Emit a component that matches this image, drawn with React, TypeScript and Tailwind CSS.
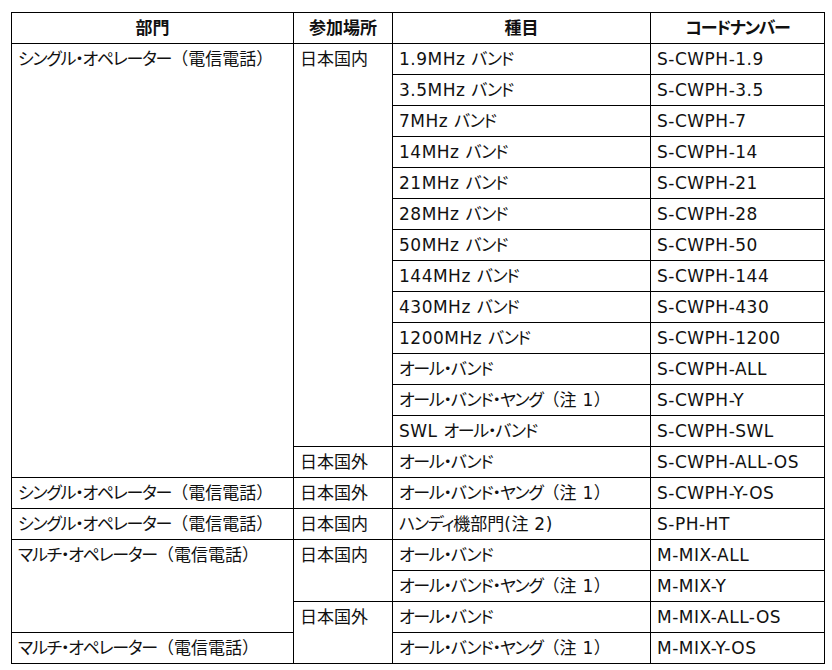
import type { ReactNode } from 'react'

type Row = {
  dept?: { text: string; span: number }
  place?: { text: string; span: number }
  event: string
  code: string
}

const SINGLE = 'シングル・オペレーター（電信電話）'
const MULTI = 'マルチ・オペレーター（電信電話）'

const rows: Row[] = [
  { dept: { text: SINGLE, span: 14 }, place: { text: '日本国内', span: 13 }, event: '1.9MHz バンド', code: 'S-CWPH-1.9' },
  { event: '3.5MHz バンド', code: 'S-CWPH-3.5' },
  { event: '7MHz バンド', code: 'S-CWPH-7' },
  { event: '14MHz バンド', code: 'S-CWPH-14' },
  { event: '21MHz バンド', code: 'S-CWPH-21' },
  { event: '28MHz バンド', code: 'S-CWPH-28' },
  { event: '50MHz バンド', code: 'S-CWPH-50' },
  { event: '144MHz バンド', code: 'S-CWPH-144' },
  { event: '430MHz バンド', code: 'S-CWPH-430' },
  { event: '1200MHz バンド', code: 'S-CWPH-1200' },
  { event: 'オール・バンド', code: 'S-CWPH-ALL' },
  { event: 'オール・バンド・ヤング（注 1）', code: 'S-CWPH-Y' },
  { event: 'SWL オール・バンド', code: 'S-CWPH-SWL' },
  { place: { text: '日本国外', span: 1 }, event: 'オール・バンド', code: 'S-CWPH-ALL-OS' },
  { dept: { text: SINGLE, span: 1 }, place: { text: '日本国外', span: 1 }, event: 'オール・バンド・ヤング（注 1）', code: 'S-CWPH-Y-OS' },
  { dept: { text: SINGLE, span: 1 }, place: { text: '日本国内', span: 1 }, event: 'ハンディ機部門(注 2)', code: 'S-PH-HT' },
  { dept: { text: MULTI, span: 3 }, place: { text: '日本国内', span: 2 }, event: 'オール・バンド', code: 'M-MIX-ALL' },
  { event: 'オール・バンド・ヤング（注 1）', code: 'M-MIX-Y' },
  { place: { text: '日本国外', span: 2 }, event: 'オール・バンド', code: 'M-MIX-ALL-OS' },
  { dept: { text: MULTI, span: 1 }, event: 'オール・バンド・ヤング（注 1）', code: 'M-MIX-Y-OS' },
]

// latin runs are set a little wider, kana a little tighter, kanji as is
function kind(ch: string) {
  if (ch.charCodeAt(0) < 128) return 'latin'
  if (/[\u30A0-\u30FF]/.test(ch)) return 'kana'
  return 'other'
}

const spacing: Record<string, string> = {
  latin: 'tracking-[0.5px]',
  kana: 'tracking-[-1.25px] [font-feature-settings:"palt"]',
  other: '',
}

function fit(text: string): ReactNode {
  const runs: { k: string; s: string }[] = []
  for (const ch of text) {
    const k = kind(ch)
    const last = runs[runs.length - 1]
    if (last && last.k === k) last.s += ch
    else runs.push({ k, s: ch })
  }
  return runs.map((r, i) => (
    <span key={i} className={spacing[r.k]}>
      {r.s}
    </span>
  ))
}

const cell = 'border border-black px-[6px] pt-[1px] align-top h-[31px] leading-[28px] whitespace-nowrap'

export default function App() {
  return (
    <div className="bg-white w-[832px] h-[670px] pl-[11px] pt-[12px] text-[17px] text-[#111] font-['DejaVu_Sans','Noto_Sans_CJK_JP',sans-serif]">
      <table className="border-collapse table-fixed w-[813px]">
        <colgroup>
          <col className="w-[282px]" />
          <col className="w-[99px]" />
          <col className="w-[258px]" />
          <col className="w-[174px]" />
        </colgroup>
        <thead>
          <tr>
            {['部門', '参加場所', '種目', 'コードナンバー'].map((h) => (
              <th key={h} className="border border-black h-[31px] leading-[28px] pt-[1px] align-top font-bold text-center whitespace-nowrap">
                {fit(h)}
              </th>
            ))}
          </tr>
        </thead>
        <tbody>
          {rows.map((r, i) => (
            <tr key={i}>
              {r.dept && (
                <td rowSpan={r.dept.span} className={cell}>
                  {fit(r.dept.text)}
                </td>
              )}
              {r.place && (
                <td rowSpan={r.place.span} className={cell}>
                  {fit(r.place.text)}
                </td>
              )}
              <td className={cell}>{fit(r.event)}</td>
              <td className={cell}>{fit(r.code)}</td>
            </tr>
          ))}
        </tbody>
      </table>
    </div>
  )
}
